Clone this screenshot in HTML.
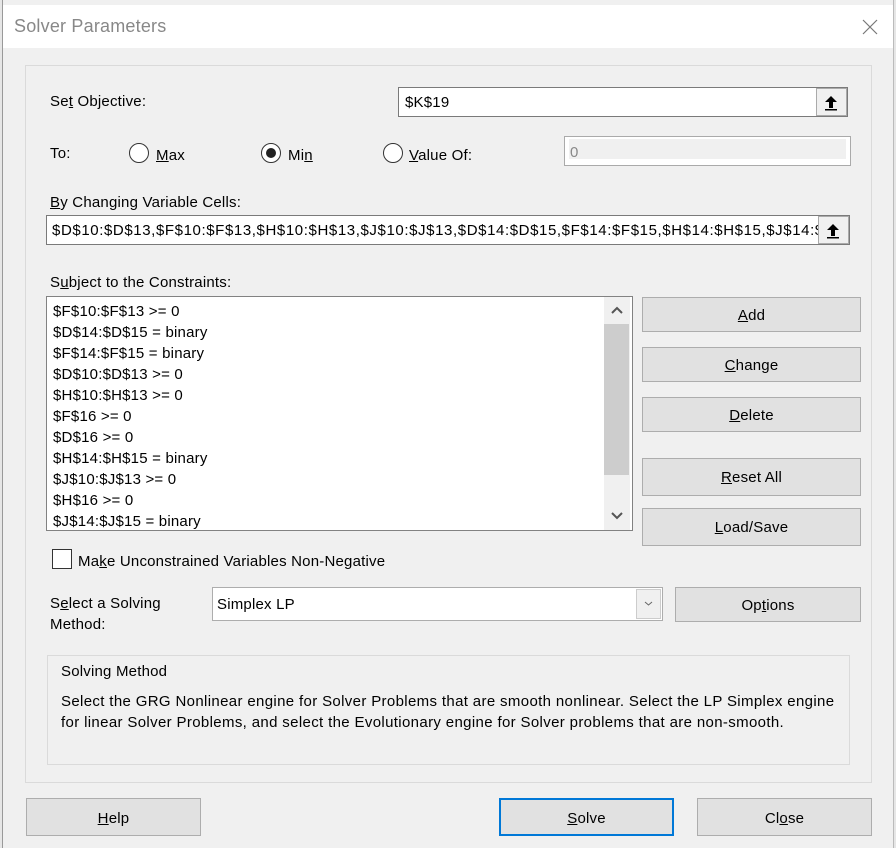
<!DOCTYPE html>
<html><head><style>
*{box-sizing:border-box;margin:0;padding:0}
body{width:896px;height:848px;background:#f0f0f0;font-family:"Liberation Sans",sans-serif;font-size:15px;color:#000;position:relative;overflow:hidden;letter-spacing:0.2px}
.a{position:absolute;white-space:nowrap}
.btn{position:absolute;background:#e1e1e1;border:1px solid #adadad;text-align:center;font-size:15px}
.inp{position:absolute;background:#fff;border:1px solid #7a7a7a}
.rad{position:absolute;width:20px;height:20px;border:1px solid #333;border-radius:50%;background:#fff}
.ref{position:absolute;right:0;top:0;width:30px;height:100%;background:#f0f0f0;border:1px solid #aaa}
u{text-decoration:underline}
</style></head><body>
<div class="a" style="left:0;top:0;width:3px;height:848px;background:#e6e6e6;border-right:1px solid #999"></div>
<div class="a" style="left:3px;top:5px;width:890px;height:43px;background:#fff"></div>
<div class="a" style="left:14px;top:16px;font-size:18px;color:#888">Solver Parameters</div>
<svg class="a" style="left:862px;top:19px" width="16" height="16"><path d="M1 1 L15 15 M15 1 L1 15" stroke="#777" stroke-width="1.2"/></svg>
<div class="a" style="left:893px;top:0;width:3px;height:848px;background:#e6e6e6;border-left:1px solid #bbb"></div>
<div class="a" style="left:25px;top:65px;width:847px;height:718px;border:1px solid #dadada"></div>

<div class="a" style="left:50px;top:93px">Se<u>t</u> Objective:</div>
<div class="inp" style="left:398px;top:87px;width:450px;height:30px"><span class="a" style="left:6px;top:6px">$K$19</span><div class="ref" style="width:31px"><svg width="29" height="28" viewBox="0 0 29 28"><path d="M14 7 L8 13 H12 V19 H16 V13 H20 Z" fill="#000"/><rect x="8" y="20" width="12" height="1.5"/></svg></div></div>

<div class="a" style="left:50px;top:145px">To:</div>
<div class="rad" style="left:129px;top:143px"></div><div class="a" style="left:156px;top:147px"><u>M</u>ax</div>
<div class="rad" style="left:261px;top:143px"><div style="position:absolute;left:4px;top:4px;width:10px;height:10px;border-radius:50%;background:#222"></div></div><div class="a" style="left:288px;top:147px">Mi<u>n</u></div>
<div class="rad" style="left:383px;top:143px"></div><div class="a" style="left:409px;top:147px"><u>V</u>alue Of:</div>
<div class="a" style="left:564px;top:136px;width:287px;height:30px;border:1px solid #aaa;background:#fff"><div style="position:absolute;left:4px;top:2px;right:4px;bottom:6px;background:#f0f0f0;color:#888;padding:5px 0 0 1px">0</div></div>

<div class="a" style="left:50px;top:194px"><u>B</u>y Changing Variable Cells:</div>
<div class="inp" style="left:46px;top:215px;width:804px;height:30px;overflow:hidden"><span class="a" style="left:5px;top:6px;letter-spacing:0.6px">$D$10:$D$13,$F$10:$F$13,$H$10:$H$13,$J$10:$J$13,$D$14:$D$15,$F$14:$F$15,$H$14:$H$15,$J$14:$J$15</span><div class="ref" style="width:31px;background:#f0f0f0"><svg width="29" height="28" viewBox="0 0 29 28"><path d="M14 7 L8 13 H12 V19 H16 V13 H20 Z" fill="#000"/><rect x="8" y="20" width="12" height="1.5"/></svg></div></div>

<div class="a" style="left:50px;top:274px">S<u>u</u>bject to the Constraints:</div>
<div class="inp" style="left:46px;top:296px;width:587px;height:235px;border-color:#828282;overflow:hidden">
<div class="a" style="left:6px;top:4px;line-height:21px;font-size:15px">$F$10:$F$13 &gt;= 0<br>$D$14:$D$15 = binary<br>$F$14:$F$15 = binary<br>$D$10:$D$13 &gt;= 0<br>$H$10:$H$13 &gt;= 0<br>$F$16 &gt;= 0<br>$D$16 &gt;= 0<br>$H$14:$H$15 = binary<br>$J$10:$J$13 &gt;= 0<br>$H$16 &gt;= 0<br>$J$14:$J$15 = binary</div>
<div class="a" style="left:557px;top:0;width:26px;height:233px;background:#f0f0f0"></div>
<div class="a" style="left:557px;top:27px;width:25px;height:151px;background:#cdcdcd"></div>
<svg class="a" style="left:563px;top:8px" width="14" height="10"><path d="M2 8 L7 3 L12 8" stroke="#555" stroke-width="2" fill="none"/></svg>
<svg class="a" style="left:563px;top:214px" width="14" height="10"><path d="M2 2 L7 7 L12 2" stroke="#555" stroke-width="2" fill="none"/></svg>
</div>

<div class="btn" style="left:642px;top:297px;width:219px;height:35px;line-height:35px"><u>A</u>dd</div>
<div class="btn" style="left:642px;top:347px;width:219px;height:35px;line-height:35px"><u>C</u>hange</div>
<div class="btn" style="left:642px;top:397px;width:219px;height:35px;line-height:35px"><u>D</u>elete</div>
<div class="btn" style="left:642px;top:458px;width:219px;height:38px;line-height:38px"><u>R</u>eset All</div>
<div class="btn" style="left:642px;top:508px;width:219px;height:38px;line-height:38px"><u>L</u>oad/Save</div>

<div class="a" style="left:52px;top:549px;width:20px;height:20px;border:1px solid #333;background:#fff"></div>
<div class="a" style="left:78px;top:553px">Ma<u>k</u>e Unconstrained Variables Non-Negative</div>

<div class="a" style="left:50px;top:593px;line-height:21px">S<u>e</u>lect a Solving<br>Method:</div>
<div class="inp" style="left:212px;top:587px;width:451px;height:34px;border-color:#adadad"><span class="a" style="left:4px;top:8px">Simplex LP</span><div class="a" style="right:1px;top:1px;width:25px;height:30px;background:#f0f0f0;border:1px solid #ccc"><svg width="23" height="28"><path d="M8 12 L11.5 15 L15 12" stroke="#666" fill="none"/></svg></div></div>
<div class="btn" style="left:675px;top:587px;width:186px;height:35px;line-height:36px">Op<u>t</u>ions</div>

<div class="a" style="left:47px;top:655px;width:803px;height:110px;border:1px solid #dadada"></div>
<div class="a" style="left:61px;top:663px">Solving Method</div>
<div class="a" style="left:61px;top:692px;line-height:20.5px;letter-spacing:0.35px">Select the GRG Nonlinear engine for Solver Problems that are smooth nonlinear. Select the LP Simplex engine<br>for linear Solver Problems, and select the Evolutionary engine for Solver problems that are non-smooth.</div>

<div class="btn" style="left:26px;top:798px;width:175px;height:38px;line-height:39px"><u>H</u>elp</div>
<div class="btn" style="left:499px;top:798px;width:175px;height:38px;line-height:37px;border:2px solid #0078d7"><u>S</u>olve</div>
<div class="btn" style="left:697px;top:798px;width:175px;height:38px;line-height:39px">Cl<u>o</u>se</div>
</body></html>
